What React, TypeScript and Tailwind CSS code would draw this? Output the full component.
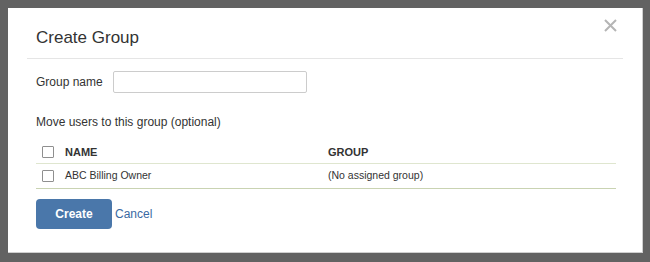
import React from "react";

function Box() {
  return <div className="w-[12px] h-[12px] border border-[#8f8f8f] rounded-[1px] bg-white shrink-0" />;
}

export default function App() {
  return (
    <div
      className="w-[650px] h-[262px] bg-[#626262] pt-[8px] pl-[8px] text-[#333]"
      style={{ fontFamily: '"Liberation Sans", Arial, sans-serif' }}
    >
      <div className="w-[635px] h-[245px] bg-white border-r border-b border-[#cfcfcf] relative">
        <div className="mx-[19px] pl-[9px] pt-[20px] pb-[10px] border-b border-[#e5e5e5]">
          <div className="text-[17px] leading-[20px] text-[#333]">Create Group</div>
        </div>
        <svg
          className="absolute left-[596px] top-[11px]"
          width="13"
          height="13"
          viewBox="0 0 13 13"
        >
          <path d="M1 1 L12 12 M12 1 L1 12" stroke="#b5b5b5" strokeWidth="2" />
        </svg>
        <div className="pl-[28px] pr-[26px]">
          <div className="mt-[12px] flex items-center h-[22px]">
            <span className="text-[12px] leading-[16px]">Group name</span>
            <div className="ml-[10px] w-[194px] h-[22px] border border-[#cccccc] rounded-[2px]" />
          </div>
          <div className="mt-[21px] text-[12px] leading-[16px]">Move users to this group (optional)</div>
          <div className="mt-[11px]">
            <div className="flex items-center h-[23px] border-b border-[#dfe6cf] text-[11px] font-bold">
              <div className="w-[29px] pl-[6px]">
                <Box />
              </div>
              <div className="w-[263px]">NAME</div>
              <div>GROUP</div>
            </div>
            <div className="flex items-center h-[25px] border-b border-[#c9d3b2] text-[10.5px]">
              <div className="w-[29px] pl-[6px]">
                <Box />
              </div>
              <div className="w-[263px]">ABC Billing Owner</div>
              <div>(No assigned group)</div>
            </div>
          </div>
          <div className="mt-[10px] flex items-center">
            <button className="w-[76px] h-[30px] rounded-[4px] bg-[#4a77aa] text-white text-[12px] font-bold">
              Create
            </button>
            <span className="ml-[3px] text-[12px] text-[#3a6aa3]">Cancel</span>
          </div>
        </div>
      </div>
    </div>
  );
}
